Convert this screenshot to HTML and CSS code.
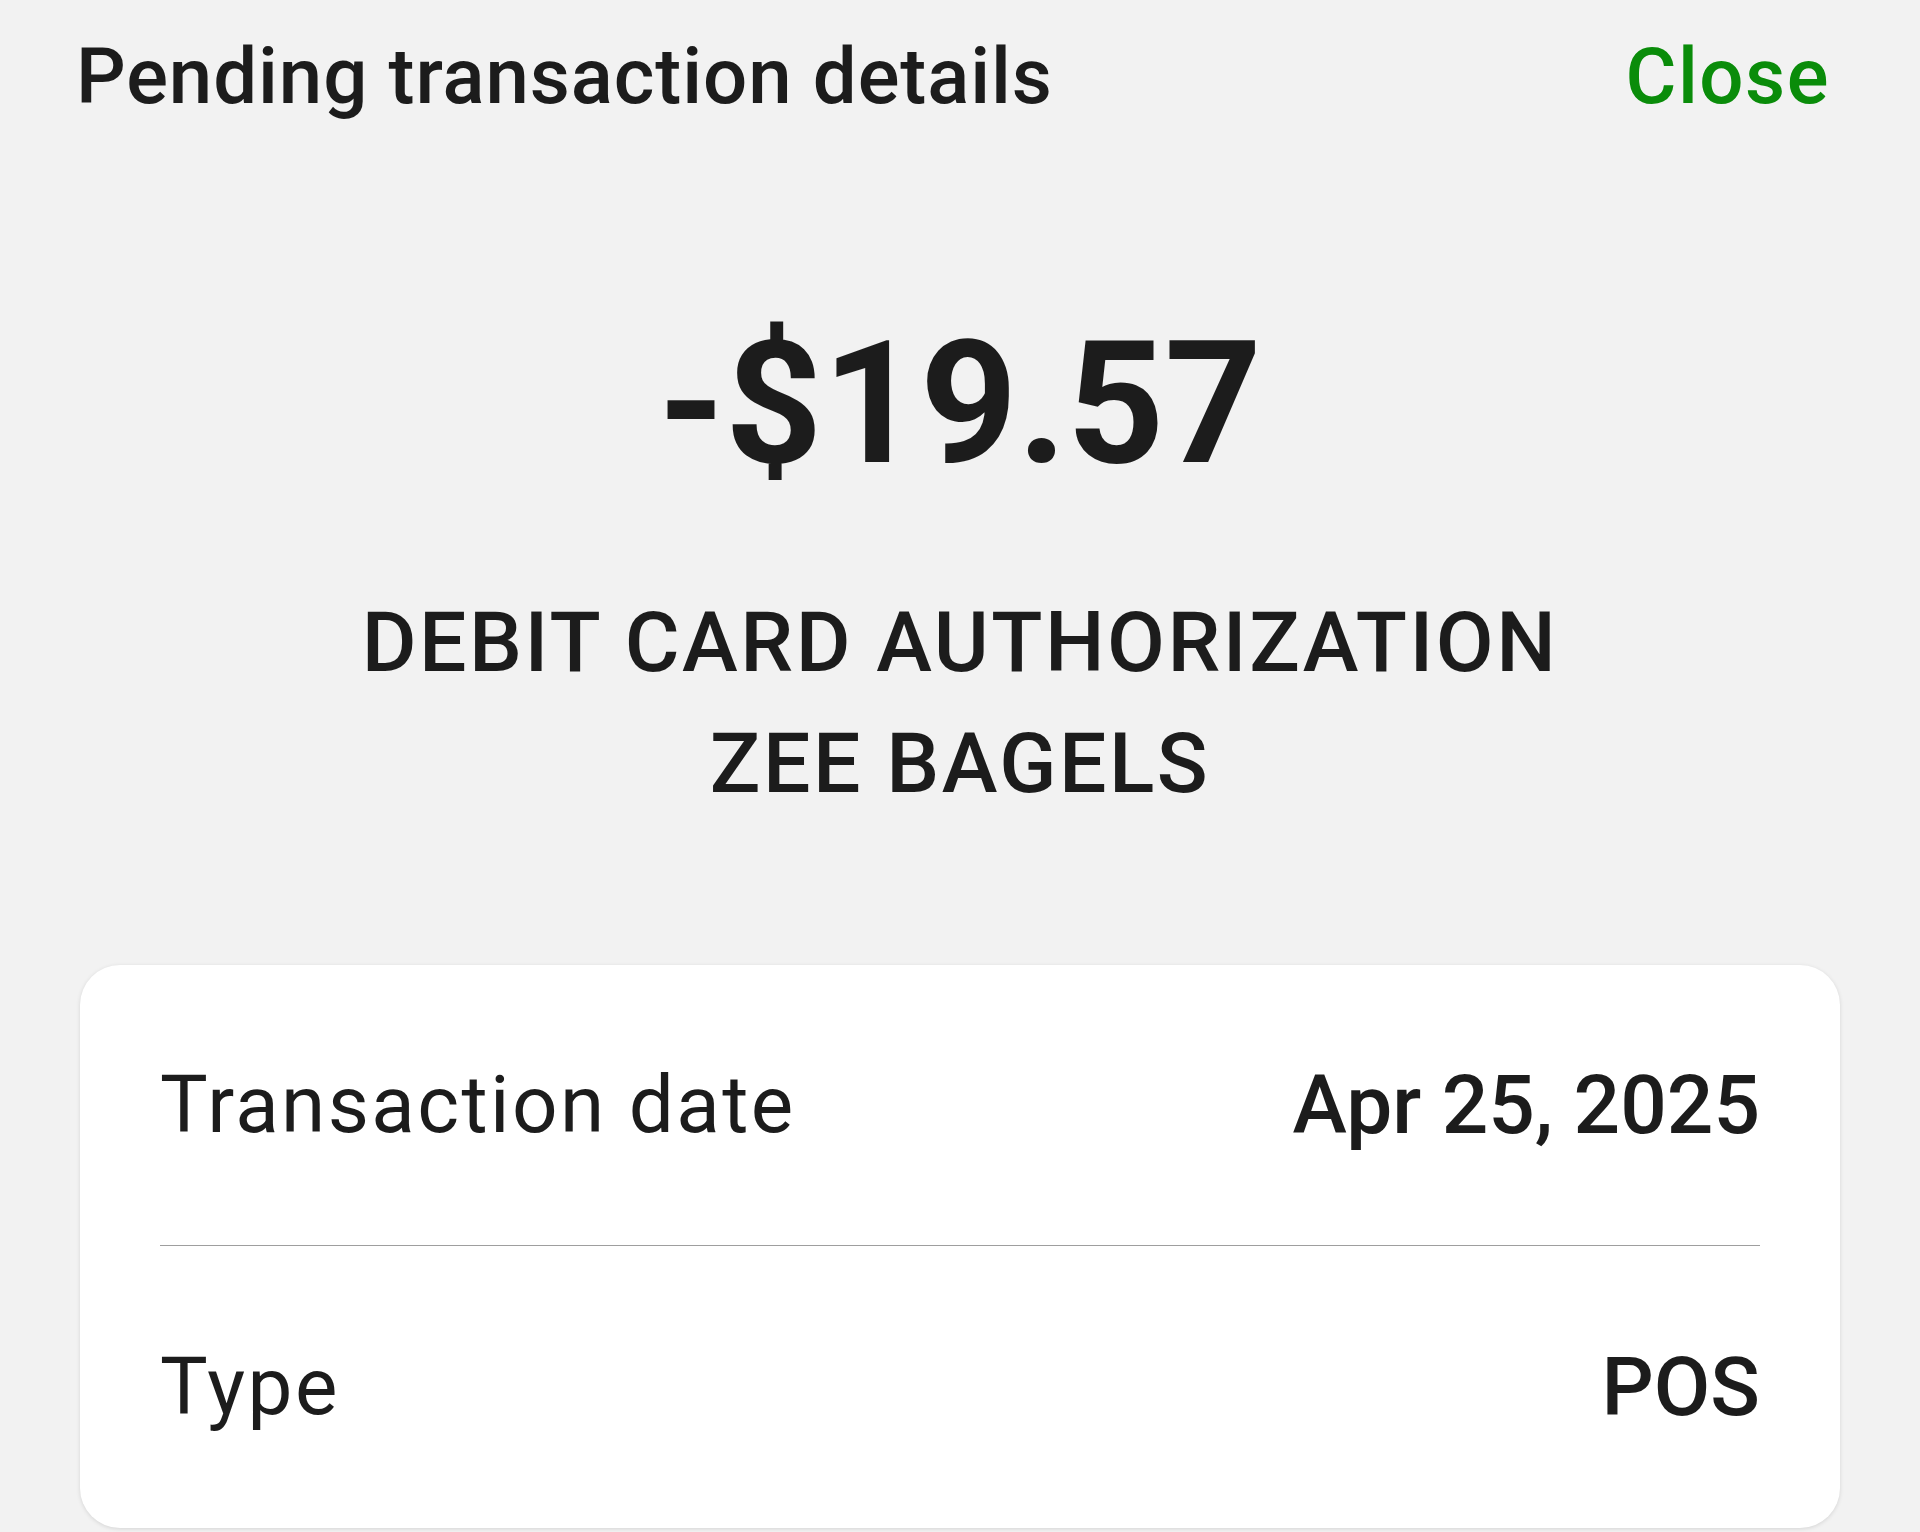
FILE: index.html
```html
<!DOCTYPE html>
<html lang="en">
<head>
<meta charset="utf-8">
<title>Pending transaction details</title>
<link rel="stylesheet" href="styles.css">
</head>
<body>
<div class="screen">
  <header class="topbar">
    <h1 class="title">Pending transaction details</h1>
    <a class="close" href="#">Close</a>
  </header>
  <div class="amount">-$19.57</div>
  <div class="desc">DEBIT CARD AUTHORIZATION<br>ZEE BAGELS</div>
  <section class="card">
    <div class="row">
      <span class="label">Transaction date</span>
      <span class="value">Apr 25, 2025</span>
    </div>
    <div class="divider"></div>
    <div class="row row-last">
      <span class="label">Type</span>
      <span class="value">POS</span>
    </div>
  </section>
</div>
</body>
</html>
```
FILE: styles.css
```css
html, body {
  margin: 0;
  padding: 0;
  background: #f2f2f2;
}
body {
  font-family: Roboto, "Noto Sans", "Liberation Sans", sans-serif;
  color: #1c1c1c;
  width: 1920px;
  height: 1532px;
  overflow: hidden;
}
.screen {
  display: flex;
  flex-direction: column;
}
.topbar {
  display: flex;
  justify-content: space-between;
  align-items: center;
  height: 154px;
  padding: 0 90px 0 76px;
}
.title {
  margin: 0;
  font-size: 78px;
  font-weight: 500;
  line-height: 154px;
  letter-spacing: 0.9px;
  color: #1c1c1c;
}
.close {
  font-size: 78px;
  font-weight: 500;
  line-height: 154px;
  letter-spacing: 1.5px;
  color: #0a8c0a;
  text-decoration: none;
}
.amount {
  margin-top: 165px;
  text-align: center;
  font-size: 170px;
  font-weight: 700;
  line-height: 170px;
}
.desc {
  margin-top: 93px;
  text-align: center;
  font-size: 84px;
  font-weight: 500;
  line-height: 121px;
  letter-spacing: 2.5px;
}
.card {
  margin: 141px 80px 0 80px;
  background: #ffffff;
  border-radius: 40px;
  box-shadow: 0 1px 4px rgba(0, 0, 0, 0.12);
  display: flex;
  flex-direction: column;
  padding: 0 80px;
}
.row {
  height: 280px;
  display: flex;
  justify-content: space-between;
  align-items: center;
}
.row-last {
  height: 282px;
}
.divider {
  height: 1px;
  background: #9e9e9e;
}
.label {
  font-size: 80px;
  font-weight: 400;
  line-height: 80px;
  letter-spacing: 2.4px;
}
.value {
  font-size: 82px;
  font-weight: 500;
  line-height: 82px;
}
```
